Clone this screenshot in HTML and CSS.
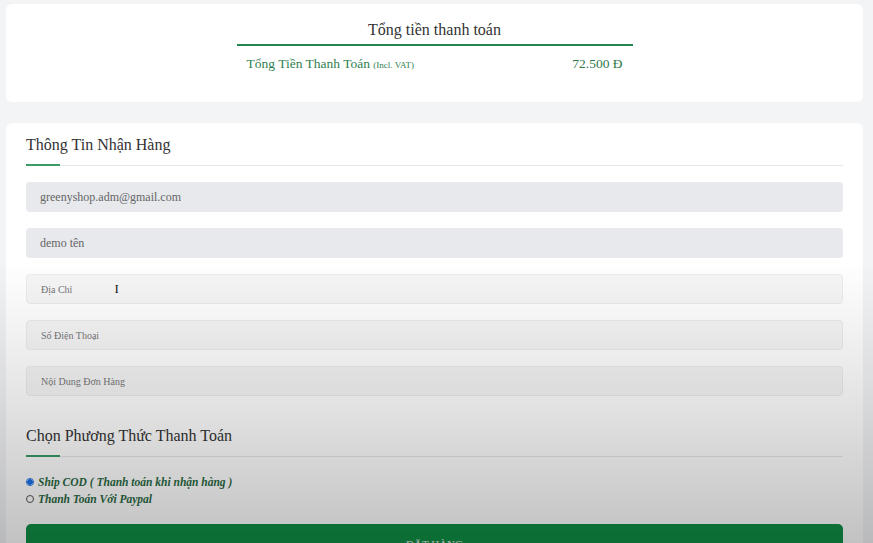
FILE: index.html
```html
<!DOCTYPE html>
<html lang="vi">
<head>
<meta charset="utf-8">
<link rel="stylesheet" href="styles.css">
</head>
<body>
<div class="page">
  <section class="card total-card">
    <div class="total">
      <h3 class="total-title">Tổng tiền thanh toán</h3>
      <div class="total-row">
        <span class="total-label">Tổng Tiền Thanh Toán <small>(Incl. VAT)</small></span>
        <span class="total-value">72.500 Đ</span>
      </div>
    </div>
  </section>

  <section class="card form-card">
    <h4 class="sec-title">Thông Tin Nhận Hàng</h4>
    <div class="divider"><span></span></div>
    <div class="fields">
      <div class="field filled">greenyshop.adm@gmail.com</div>
      <div class="field filled">demo tên</div>
      <div class="field ph">Địa Chỉ <span class="cursor">I</span></div>
      <div class="field ph">Số Điện Thoại</div>
      <div class="field ph">Nội Dung Đơn Hàng</div>
    </div>

    <h4 class="sec-title pay-title">Chọn Phương Thức Thanh Toán</h4>
    <div class="divider"><span></span></div>
    <div class="radios">
      <label class="radio"><span class="dot on"></span>Ship COD ( Thanh toán khi nhận hàng )</label>
      <label class="radio"><span class="dot"></span>Thanh Toán Với Paypal</label>
    </div>
    <button class="order">ĐẶT HÀNG</button>
  </section>
</div>
<div class="shade"></div>
</body>
</html>
```

FILE: styles.css
```css
* { box-sizing: border-box; }
html, body { margin: 0; padding: 0; height: 100%; overflow: hidden; }
body {
  background: #f3f4f6;
  font-family: "Liberation Serif", "Times New Roman", serif;
  color: #333;
}
.page { padding: 4px 10px 0 6px; }
.card {
  background: #fff;
  border-radius: 6px;
}
.total-card {
  height: 98px;
  display: flex;
  justify-content: center;
  padding-top: 15px;
}
.total { width: 396px; }
.total-title {
  margin: 0;
  text-align: center;
  font-weight: normal;
  font-size: 16px;
  line-height: 22px;
  color: #333;
  padding-bottom: 3px;
  border-bottom: 2px solid #24864f;
}
.total-row {
  display: flex;
  justify-content: space-between;
  padding: 8px 10px 0 10px;
  color: #2f8050;
  font-size: 13.5px;
  line-height: 20px;
}
.total-label small { font-size: 9px; }
.total-value { color: #2f7a4a; }

.form-card {
  margin-top: 21px;
  padding: 11px 20px 30px 20px;
  min-height: 440px;
}
.sec-title {
  margin: 0;
  font-weight: normal;
  font-size: 16px;
  line-height: 22px;
  color: #333;
}
.divider {
  margin-top: 9px;
  height: 1px;
  background: #e6e7ea;
  position: relative;
}
.divider span {
  position: absolute;
  left: 0; top: -1px;
  width: 34px; height: 2px;
  background: #3c9a66;
}
.fields {
  display: flex;
  flex-direction: column;
  gap: 16px;
  margin-top: 16px;
}
.field {
  height: 30px;
  border-radius: 4px;
  padding: 0 14px;
  display: flex;
  align-items: center;
  font-size: 12px;
  color: #666;
}
.field.filled { background: #e8e9ed; }
.field.ph {
  background: #f6f6f7;
  border: 1px solid #ececee;
  font-size: 10px;
  color: #777;
}
.cursor {
  margin-left: 42px;
  font-size: 13px;
  color: #222;
}
.pay-title { margin-top: 29px; }
.radios {
  margin-top: 18px;
  display: flex;
  flex-direction: column;
  gap: 3px;
}
.radio {
  display: flex;
  align-items: center;
  gap: 4px;
  font-style: italic;
  font-weight: bold;
  font-size: 11.5px;
  line-height: 14px;
  color: #2b6a44;
}
.dot {
  width: 8px; height: 8px;
  border-radius: 50%;
  border: 1px solid #555;
  background: #fff;
  flex: none;
}
.dot.on {
  border-color: #1a73e8;
  background: radial-gradient(circle, #1a73e8 0 2.5px, #fff 3px);
}
.order {
  margin-top: 18px;
  width: 100%;
  height: 40px;
  border: none;
  border-radius: 5px;
  background: #129046;
  color: #e6efe9;
  font-family: inherit;
  font-size: 11px;
  padding: 0;
  display: block;
  text-align: center;
  line-height: 30px;
}
.shade {
  position: fixed;
  inset: 0;
  pointer-events: none;
  background: linear-gradient(to bottom,
    rgba(0,0,0,0) 0%,
    rgba(0,0,0,0) 48%,
    rgba(0,0,0,0.04) 58%,
    rgba(0,0,0,0.11) 74%,
    rgba(0,0,0,0.24) 100%);
}
```
